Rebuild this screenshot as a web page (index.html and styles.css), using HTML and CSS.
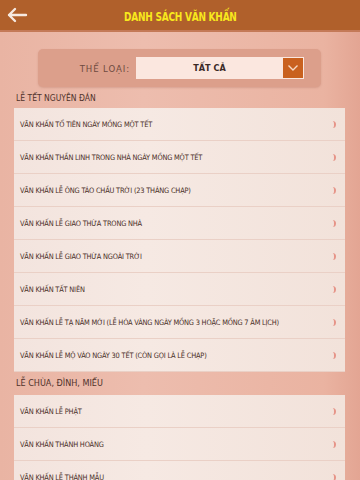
FILE: index.html
```html
<!DOCTYPE html>
<html lang="vi">
<head>
<meta charset="utf-8">
<link rel="stylesheet" href="styles.css">
</head>
<body>
<header class="topbar">
  <svg class="back" width="22" height="16" viewBox="0 0 22 16"><path d="M20 8H3M9 2L3 8l6 6" fill="none" stroke="#f6e9e0" stroke-width="2.4" stroke-linecap="round" stroke-linejoin="round"/></svg>
  <h1 class="title">DANH SÁCH VĂN KHẤN</h1>
</header>
<div class="stitch"></div>
<main class="content">
  <div class="filter">
    <span class="filter-label">THỂ LOẠI:</span>
    <div class="select">
      <span class="select-value">TẤT CẢ</span>
      <span class="select-btn"><svg width="12" height="8" viewBox="0 0 12 8"><path d="M1.5 1.5L6 6l4.5-4.5" fill="none" stroke="#f7d9c4" stroke-width="1.4"/></svg></span>
    </div>
  </div>

  <div class="section">LỄ TẾT NGUYÊN ĐÁN</div>
  <ul class="list">
    <li>VĂN KHẤN TỔ TIÊN NGÀY MỒNG MỘT TẾT</li>
    <li>VĂN KHẤN THẦN LINH TRONG NHÀ NGÀY MỒNG MỘT TẾT</li>
    <li>VĂN KHẤN LỄ ÔNG TÁO CHẦU TRỜI (23 THÁNG CHẠP)</li>
    <li>VĂN KHẤN LỄ GIAO THỪA TRONG NHÀ</li>
    <li>VĂN KHẤN LỄ GIAO THỪA NGOÀI TRỜI</li>
    <li>VĂN KHẤN TẤT NIÊN</li>
    <li>VĂN KHẤN LỄ TẠ NĂM MỚI (LỄ HÓA VÀNG NGÀY MỒNG 3 HOẶC MỒNG 7 ÂM LỊCH)</li>
    <li>VĂN KHẤN LỄ MỘ VÀO NGÀY 30 TẾT (CÒN GỌI LÀ LỄ CHẠP)</li>
  </ul>

  <div class="section section-2">LỄ CHÙA, ĐÌNH, MIẾU</div>
  <ul class="list">
    <li>VĂN KHẤN LỄ PHẬT</li>
    <li>VĂN KHẤN THÀNH HOÀNG</li>
    <li>VĂN KHẤN LỄ THÁNH MẪU</li>
  </ul>
</main>
</body>
</html>
```
FILE: styles.css
```css
* { box-sizing: border-box; }
html, body { margin: 0; padding: 0; }
body {
  width: 360px;
  height: 480px;
  overflow: hidden;
  font-family: "DejaVu Sans Condensed", "DejaVu Sans", sans-serif;
  font-stretch: condensed;
  background: linear-gradient(90deg, #e9b4a3 0%, #edbdae 40%, #eab3a1 90%, #e3a593 100%);
}
.topbar {
  height: 30px;
  background: #b0602b;
  display: flex;
  align-items: center;
  justify-content: center;
  position: relative;
}
.back { position: absolute; left: 6px; top: 7px; }
.title {
  margin: 0;
  font-size: 12.5px;
  font-weight: bold;
  color: #f8e81c;
  letter-spacing: -0.3px;
  padding-top: 2px;
  transform: scaleX(0.8);
}
.stitch {
  height: 4px;
  background: #b0602b;
  border-top: 1px dashed #e8c2a8;
  border-bottom: 2px solid #c47a58;
  margin-top: -2px;
}
.content { padding: 17px 15px 0 14px; }
.filter {
  margin: 0 24px 0 24px;
  height: 38px;
  background: #dc9f8b;
  border-radius: 5px;
  display: flex;
  align-items: center;
  justify-content: flex-end;
  padding-right: 17px;
  gap: 6px;
  box-shadow: 0 1px 2px rgba(160,90,70,0.25);
}
.filter-label {
  font-size: 9.5px;
  color: #6e4a40;
  letter-spacing: 0.9px;
}
.select {
  width: 168px;
  height: 22px;
  background: #fbe7df;
  display: flex;
  align-items: center;
}
.select-value {
  flex: 1;
  text-align: center;
  font-size: 9px;
  font-weight: bold;
  color: #3a2a26;
}
.select-btn {
  width: 20px;
  height: 20px;
  margin-right: 1px;
  background: #c9611f;
  display: flex;
  align-items: center;
  justify-content: center;
}
.section {
  font-size: 8.5px;
  color: #4f322b;
  padding: 6px 0 4px 2px;
  height: 21px;
}
.list {
  list-style: none;
  margin: 0;
  padding: 0;
  background: #f5e4dd;
  width: 331px;
}
.list li {
  height: 33px;
  display: flex;
  align-items: center;
  padding-left: 6px;
  font-size: 7.4px;
  letter-spacing: -0.2px;
  color: #4a2f28;
  border-bottom: 1px solid #ead0c6;
  position: relative;
  background: linear-gradient(90deg, #f3e4de, #f6e9e3 40%, #f2e2da);
}
.list li::after {
  content: "";
  position: absolute;
  right: 9px;
  top: 13px;
  width: 3px;
  height: 7px;
  border-right: 2px solid #e69488;
  border-radius: 0 6px 6px 0;
}
.section-2 { padding-top: 6px; height: 23px; font-size: 9px; }
```
